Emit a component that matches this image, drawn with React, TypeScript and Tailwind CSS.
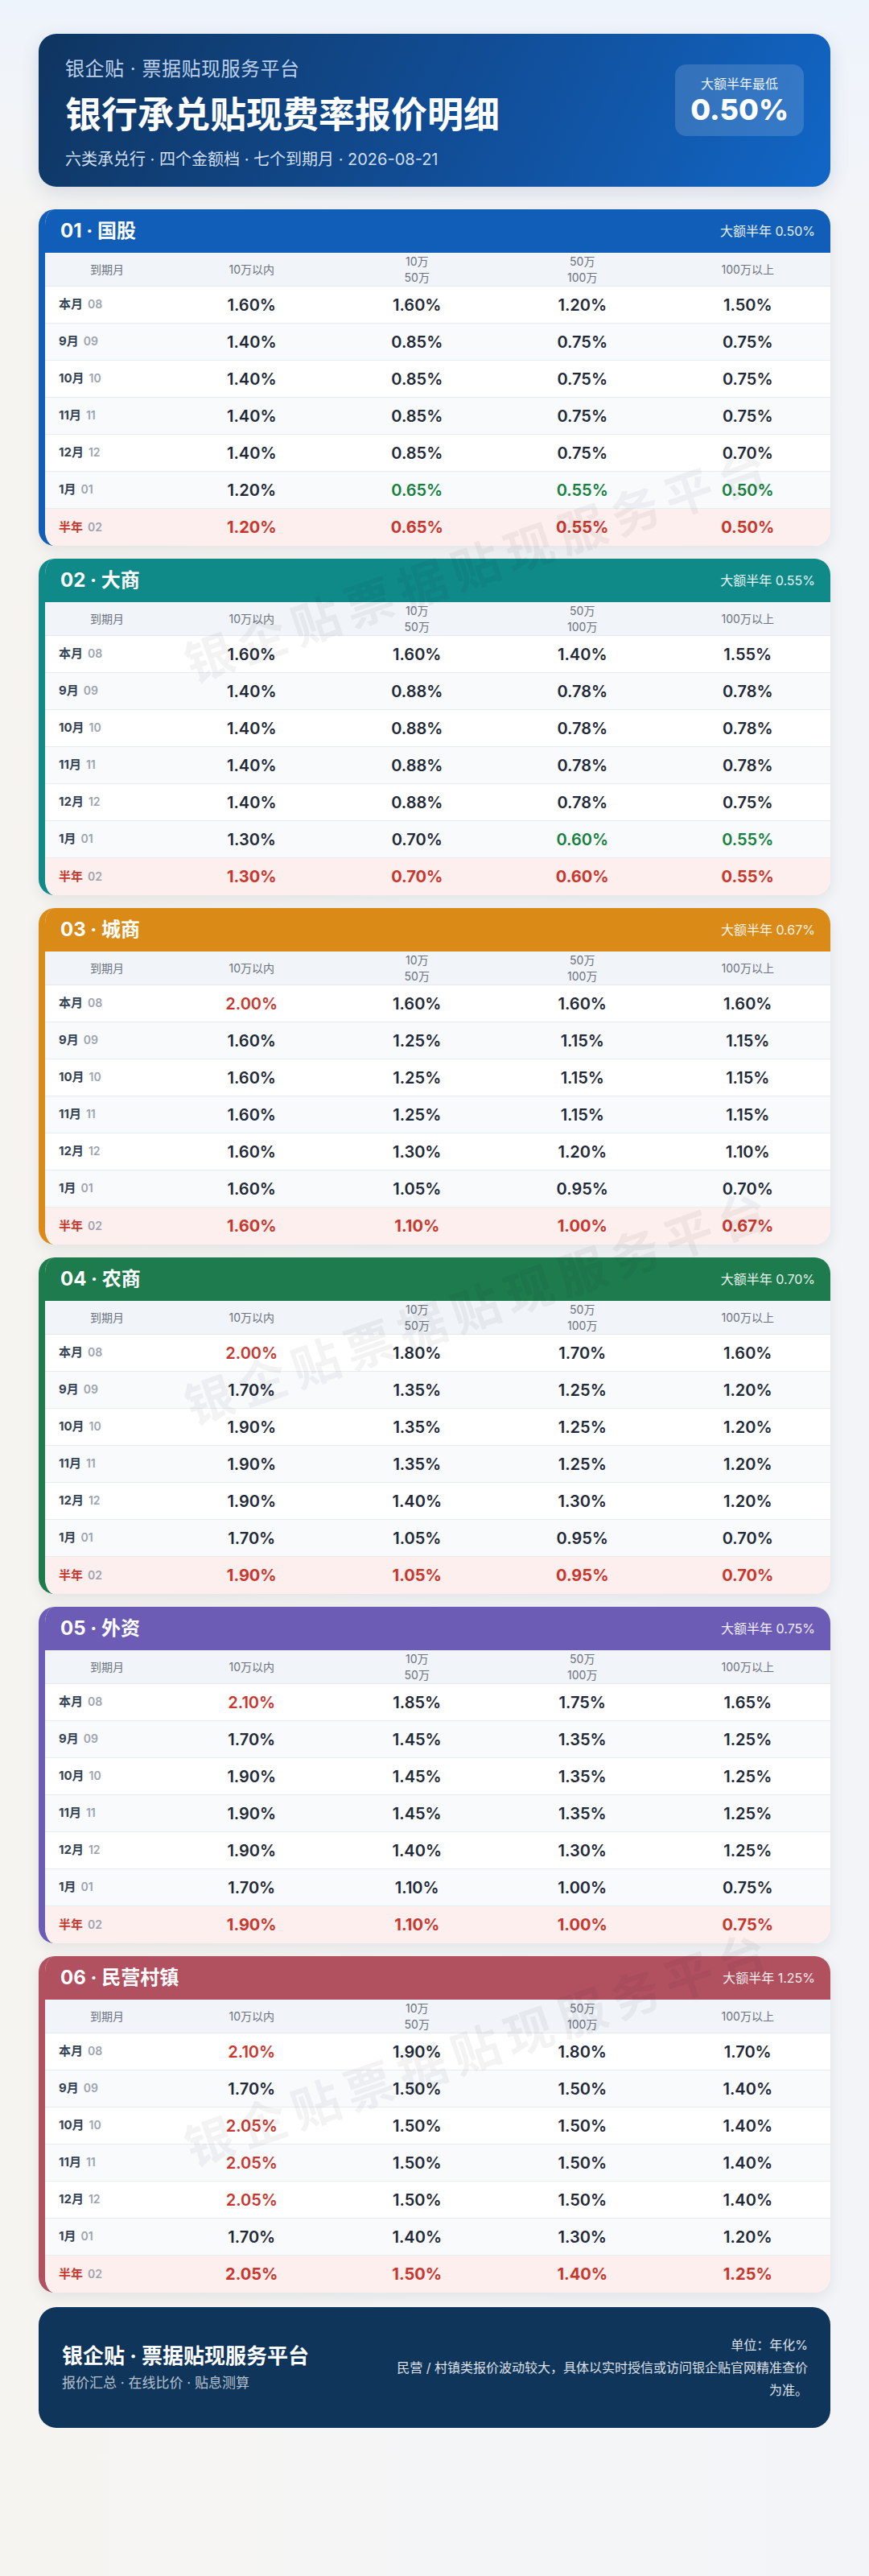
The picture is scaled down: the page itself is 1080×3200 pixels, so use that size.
import React from "react"

type Section = {
  no: string
  name: string
  bg: string
  border: string
  low: string
  rows: string[][]
}

const monthLabels = [
  ["本月", "08"],
  ["9月", "09"],
  ["10月", "10"],
  ["11月", "11"],
  ["12月", "12"],
  ["1月", "01"],
  ["半年", "02"],
]

const sections: Section[] = [
  {
    no: "01",
    name: "国股",
    bg: "bg-[#115eb8]",
    border: "border-[#115eb8]",
    low: "0.50%",
    rows: [
      ["1.60", "1.60", "1.20", "1.50"],
      ["1.40", "0.85", "0.75", "0.75"],
      ["1.40", "0.85", "0.75", "0.75"],
      ["1.40", "0.85", "0.75", "0.75"],
      ["1.40", "0.85", "0.75", "0.70"],
      ["1.20", "0.65", "0.55", "0.50"],
      ["1.20", "0.65", "0.55", "0.50"],
    ],
  },
  {
    no: "02",
    name: "大商",
    bg: "bg-[#0f8a89]",
    border: "border-[#0f8a89]",
    low: "0.55%",
    rows: [
      ["1.60", "1.60", "1.40", "1.55"],
      ["1.40", "0.88", "0.78", "0.78"],
      ["1.40", "0.88", "0.78", "0.78"],
      ["1.40", "0.88", "0.78", "0.78"],
      ["1.40", "0.88", "0.78", "0.75"],
      ["1.30", "0.70", "0.60", "0.55"],
      ["1.30", "0.70", "0.60", "0.55"],
    ],
  },
  {
    no: "03",
    name: "城商",
    bg: "bg-[#d98a17]",
    border: "border-[#d98a17]",
    low: "0.67%",
    rows: [
      ["2.00", "1.60", "1.60", "1.60"],
      ["1.60", "1.25", "1.15", "1.15"],
      ["1.60", "1.25", "1.15", "1.15"],
      ["1.60", "1.25", "1.15", "1.15"],
      ["1.60", "1.30", "1.20", "1.10"],
      ["1.60", "1.05", "0.95", "0.70"],
      ["1.60", "1.10", "1.00", "0.67"],
    ],
  },
  {
    no: "04",
    name: "农商",
    bg: "bg-[#1d7b4d]",
    border: "border-[#1d7b4d]",
    low: "0.70%",
    rows: [
      ["2.00", "1.80", "1.70", "1.60"],
      ["1.70", "1.35", "1.25", "1.20"],
      ["1.90", "1.35", "1.25", "1.20"],
      ["1.90", "1.35", "1.25", "1.20"],
      ["1.90", "1.40", "1.30", "1.20"],
      ["1.70", "1.05", "0.95", "0.70"],
      ["1.90", "1.05", "0.95", "0.70"],
    ],
  },
  {
    no: "05",
    name: "外资",
    bg: "bg-[#6c5cb6]",
    border: "border-[#6c5cb6]",
    low: "0.75%",
    rows: [
      ["2.10", "1.85", "1.75", "1.65"],
      ["1.70", "1.45", "1.35", "1.25"],
      ["1.90", "1.45", "1.35", "1.25"],
      ["1.90", "1.45", "1.35", "1.25"],
      ["1.90", "1.40", "1.30", "1.25"],
      ["1.70", "1.10", "1.00", "0.75"],
      ["1.90", "1.10", "1.00", "0.75"],
    ],
  },
  {
    no: "06",
    name: "民营村镇",
    bg: "bg-[#b1505f]",
    border: "border-[#b1505f]",
    low: "1.25%",
    rows: [
      ["2.10", "1.90", "1.80", "1.70"],
      ["1.70", "1.50", "1.50", "1.40"],
      ["2.05", "1.50", "1.50", "1.40"],
      ["2.05", "1.50", "1.50", "1.40"],
      ["2.05", "1.50", "1.50", "1.40"],
      ["1.70", "1.40", "1.30", "1.20"],
      ["2.05", "1.50", "1.40", "1.25"],
    ],
  },
]

function Hero() {
  return (
    <div className="flex items-start justify-between rounded-[22px] bg-[linear-gradient(115deg,#0f3560_0%,#114e98_55%,#1166c6_100%)] px-[33px] pt-[26px] pb-[20px] shadow-[0_8px_24px_rgba(15,40,80,0.12)]">
      <div>
        <div className="text-[24px] leading-[36px] tracking-[0.5px] text-[#bcd0ea]">
          银企贴 · 票据贴现服务平台
        </div>
        <h1 className="mt-[11px] text-[45px] font-bold leading-[56px] text-white">
          银行承兑贴现费率报价明细
        </h1>
        <div className="mt-[13px] text-[20px] leading-[28px] text-[#d2dff1]">
          六类承兑行 · 四个金额档 · 七个到期月 · 2026-08-21
        </div>
      </div>
      <div className="mt-[12px] rounded-[14px] bg-white/15 px-[19px] py-[13px] text-center">
        <div className="text-[16px] leading-[22px] text-white/90">大额半年最低</div>
        <div className="mt-[1px] text-[36px] font-extrabold leading-[40px] text-white">0.50%</div>
      </div>
    </div>
  )
}

function valueColor(v: string, half: boolean) {
  if (half) return "text-[#c8372d] font-bold"
  const n = parseFloat(v)
  if (n >= 2) return "text-[#c8372d] font-semibold"
  if (n < 0.7) return "text-[#15803d] font-semibold"
  return "text-[#1f2937] font-semibold"
}

function RateCard({ section }: { section: Section }) {
  return (
    <div
      className={`overflow-hidden rounded-[20px] border-l-8 bg-white shadow-[0_6px_18px_rgba(15,23,42,0.08)] ${section.border}`}
    >
      {/* Title bar */}
      <div className={`flex h-[54px] items-center justify-between px-[19px] ${section.bg}`}>
        <div className="text-[24px] font-bold text-white">
          {section.no} · {section.name}
        </div>
        <div className="text-[16px] text-white/90">大额半年 {section.low}</div>
      </div>

      {/* Column heads */}
      <div className="grid h-[42px] grid-cols-[154px_repeat(4,minmax(0,1fr))] items-center border-b border-[#e3e8ef] bg-[#f1f4f8] text-center text-[14px] leading-[20px] text-[#6b7280]">
        <div>到期月</div>
        <div>10万以内</div>
        <div>
          10万
          <br />
          50万
        </div>
        <div>
          50万
          <br />
          100万
        </div>
        <div>100万以上</div>
      </div>

      {section.rows.map((row, i) => {
        const half = i === 6
        const rowBg = half ? "bg-[#fdefed]" : i % 2 === 1 ? "bg-[#f8fafc]" : "bg-white"
        return (
          <div
            key={i}
            className={`grid h-[46px] grid-cols-[154px_repeat(4,minmax(0,1fr))] items-center ${rowBg} ${
              half ? "" : "border-b border-[#e7ecf2]"
            }`}
          >
            <div className="flex items-baseline gap-[6px] pl-[17px]">
              <span className={`text-[15px] font-bold ${half ? "text-[#c8372d]" : "text-[#334155]"}`}>
                {monthLabels[i][0]}
              </span>
              <span className="text-[14px] font-semibold text-[#9ca3af]">{monthLabels[i][1]}</span>
            </div>
            {row.map((v, j) => (
              <div key={j} className={`text-center text-[20px] ${valueColor(v, half)}`}>
                {v}%
              </div>
            ))}
          </div>
        )
      })}
    </div>
  )
}

function Footer() {
  return (
    <div className="mt-[18px] flex h-[150px] items-center justify-between rounded-[22px] bg-[#0f355b] pl-[29px] pr-[28px]">
      <div>
        <div className="text-[26px] font-bold leading-[36px] text-white">银企贴 · 票据贴现服务平台</div>
        <div className="mt-[2px] text-[17px] leading-[26px] text-white/70">
          报价汇总 · 在线比价 · 贴息测算
        </div>
      </div>
      <div className="w-[516px] text-right text-[16px] leading-[28px] text-white/85">
        <div>单位：年化%</div>
        <div>民营 / 村镇类报价波动较大，具体以实时授信或访问银企贴官网精准查价为准。</div>
      </div>
    </div>
  )
}

export default function App() {
  return (
    <div className="relative min-h-[3200px] overflow-hidden bg-[linear-gradient(180deg,#eef4fc_0px,rgba(238,244,252,0)_320px),linear-gradient(90deg,#f6f4f0_0%,#f4f5f6_50%,#f3f4f7_100%)] px-12 pt-[42px] pb-10 font-['Inter','Noto_Sans_CJK_SC',sans-serif]">
      <Hero />

      <div className="mt-7 flex flex-col gap-4">
        {sections.map((s) => (
          <RateCard key={s.no} section={s} />
        ))}
      </div>

      <Footer />

      {/* Watermarks */}
      <div className="pointer-events-none absolute left-[596px] top-[702px] -translate-x-1/2 -translate-y-1/2 -rotate-[19deg] whitespace-nowrap text-[60px] font-bold tracking-[10px] text-[rgba(15,23,42,0.05)]">
        银企贴票据贴现服务平台
      </div>
      <div className="pointer-events-none absolute left-[596px] top-[1624px] -translate-x-1/2 -translate-y-1/2 -rotate-[19deg] whitespace-nowrap text-[60px] font-bold tracking-[10px] text-[rgba(15,23,42,0.05)]">
        银企贴票据贴现服务平台
      </div>
      <div className="pointer-events-none absolute left-[596px] top-[2545px] -translate-x-1/2 -translate-y-1/2 -rotate-[19deg] whitespace-nowrap text-[60px] font-bold tracking-[10px] text-[rgba(15,23,42,0.05)]">
        银企贴票据贴现服务平台
      </div>
    </div>
  )
}
